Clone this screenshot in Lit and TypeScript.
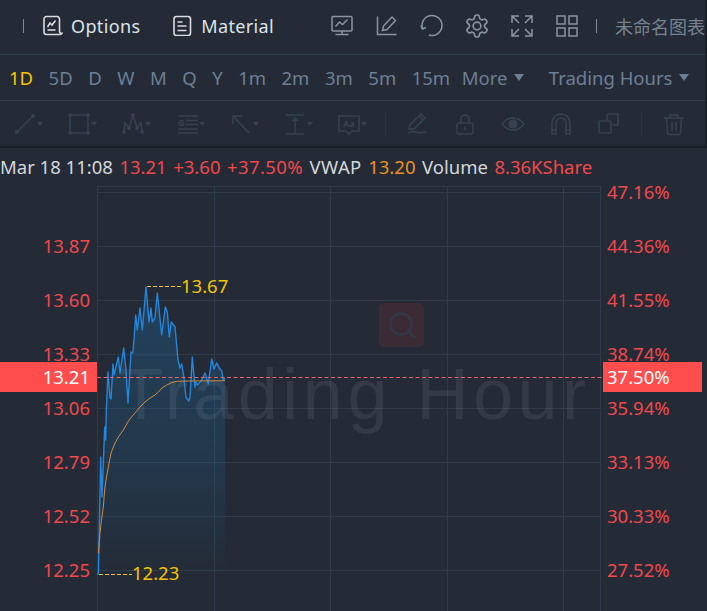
import { LitElement, html, svg, css } from "lit";
import { customElement } from "lit/decorators.js";

const PERIODS = ["5D", "D", "W", "M", "Q", "Y", "1m", "2m", "3m", "5m", "15m"];

const GRID_X = [97, 214, 330, 447, 563, 600];
const GRID_Y = [186, 192, 246, 300, 354, 408, 462, 516, 570];

const LEFT_AXIS: [string, number][] = [
  ["13.87", 246],
  ["13.60", 300],
  ["13.33", 354],
  ["13.06", 408],
  ["12.79", 462],
  ["12.52", 516],
  ["12.25", 570],
];

const RIGHT_AXIS: [string, number][] = [
  ["47.16%", 192],
  ["44.36%", 246],
  ["41.55%", 300],
  ["38.74%", 354],
  ["35.94%", 408],
  ["33.13%", 462],
  ["30.33%", 516],
  ["27.52%", 570],
];

// traced from the intraday curve, page coordinates
const PRICE: [number, number][] = [
  [98, 575], [98.5, 570], [100.7, 457], [102, 497], [104.7, 427], [105.7, 440], [106.3, 410],
  [108, 372], [110, 398], [111, 399], [113, 364], [114, 375], [118.3, 357], [120, 373],
  [123.7, 348], [125.7, 367], [128, 403], [131, 352], [132.7, 353], [134, 340], [135.7, 315],
  [137.3, 330], [140, 308], [142.3, 330], [146, 287], [149, 322], [151, 308], [152.3, 322],
  [155, 318], [157.3, 293], [161.7, 335], [165.3, 307], [167.3, 312], [169.3, 337],
  [171.3, 322], [175, 327], [178, 360], [180, 368], [181.7, 364], [184, 378], [186, 397],
  [188.7, 401], [190, 397], [192.3, 357], [195, 387], [196, 382], [197.3, 385], [199.3, 383],
  [201.7, 380], [205, 373], [208.3, 384], [211.7, 359], [214, 369], [216.7, 363], [219.3, 368],
  [221.7, 371], [223.3, 380], [225, 378],
];

const VWAP: [number, number][] = [
  [98.5, 553], [100, 533], [101.5, 520], [103.3, 507], [105, 486], [108.3, 467], [111, 453],
  [115, 443], [119, 436], [123.3, 430], [129, 420], [135, 413], [140, 407], [145, 402],
  [150, 398], [155, 395], [158.3, 392], [162, 388], [166.7, 385], [172, 382.500],
  [177.3, 381.3], [190, 381], [225, 380.7],
];

const toPoints = (pts: [number, number][]) => pts.map(([x, y]) => `${x},${y}`).join(" ");

const ICONS = {
  options: svg`<path d="M3.500 1h10.500a2.500 2.500 0 0 1 2.500 2.500V15.500c0 1.500.6 2.300 2 2.300h.5c-.3 .8-1 1.200-2 1.200H3.500A2.500 2.500 0 0 1 1 16.500V3.500A2.500 2.500 0 0 1 3.500 1z"/><path d="M4.500 11.500l2.500-4 2 2 3.500-4.500"/><path d="M4.500 14.500h8"/>`,
  material: svg`<rect x="1" y="1" width="16.500" height="19" rx="2.500"/><path d="M4.500 6.500h5M4.500 10.500h9M4.500 15h9"/>`,
  monitor: svg`<rect x="1" y="1.500" width="20" height="14.500" rx="1"/><path d="M4.500 11.500l4-4.500 3 2.500 5-5"/><path d="M11 16v3.500M4.500 19.500h13"/>`,
  edit: svg`<path d="M1.500 1.500v18h19"/><path d="M6.500 15.500l1-4.500 8.500-9 3.500 3.500-8.500 9z"/>`,
  undo: svg`<path d="M1.500 13.600A10 10 0 1 1 8 20"/><path d="M0 10.500L1.500 14l3.500-1.500"/>`,
  expand: svg`<path d="M1 8V1h7M1 1l7 7M14 1h7v7M21 1l-7 7M1 14v7h7M1 21l7-7M21 14v7h-7M21 21l-7-7"/>`,
  grid: svg`<rect x="1" y="1" width="8" height="8"/><rect x="13" y="1" width="8" height="8"/><rect x="1" y="13" width="8" height="8"/><rect x="13" y="13" width="8" height="8"/>`,
  gear: svg`<path d="M12.220 2h-.44a2 2 0 0 0-2 2v.18a2 2 0 0 1-1 1.730l-.43.25a2 2 0 0 1-2 0l-.15-.08a2 2 0 0 0-2.730.73l-.22.38a2 2 0 0 0 .73 2.730l.15.1a2 2 0 0 1 1 1.720v.51a2 2 0 0 1-1 1.740l-.15.09a2 2 0 0 0-.73 2.730l.22.38a2 2 0 0 0 2.730.73l.15-.08a2 2 0 0 1 2 0l.43.25a2 2 0 0 1 1 1.730V20a2 2 0 0 0 2 2h.44a2 2 0 0 0 2-2v-.18a2 2 0 0 1 1-1.730l.43-.25a2 2 0 0 1 2 0l.15.08a2 2 0 0 0 2.730-.73l.22-.39a2 2 0 0 0-.73-2.730l-.15-.08a2 2 0 0 1-1-1.740v-.5a2 2 0 0 1 1-1.740l.15-.09a2 2 0 0 0 .73-2.730l-.22-.38a2 2 0 0 0-2.730-.73l-.15.08a2 2 0 0 1-2 0l-.43-.25a2 2 0 0 1-1-1.730V4a2 2 0 0 0-2-2z"/><circle cx="12" cy="12" r="3.500"/>`,
};

const TOOLS = [
  svg`<path d="M4 20L20 4"/><circle cx="4" cy="20" r="2" class="dot"/><circle cx="20" cy="4" r="2" class="dot"/>`,
  svg`<rect x="3" y="3" width="18" height="18"/><circle cx="3" cy="3" r="2" class="dot"/><circle cx="21" cy="3" r="2" class="dot"/><circle cx="3" cy="21" r="2" class="dot"/><circle cx="21" cy="21" r="2" class="dot"/>`,
  svg`<path d="M3 20l1-9 4 5 4-13 4 13 4-5 1 9"/><circle cx="3" cy="20" r="2" class="dot"/><circle cx="8" cy="16" r="2" class="dot"/><circle cx="12" cy="3" r="2" class="dot"/><circle cx="16" cy="16" r="2" class="dot"/><circle cx="21" cy="20" r="2" class="dot"/>`,
  svg`<path d="M3 4h20M11 8.500h12M11 12.500h12M3 17h20M3 21h20"/><text x="3" y="14" class="tool-glyph">G</text>`,
  svg`<path d="M4 4l16 17M4 12V4h9"/>`,
  svg`<path d="M3 3h18M3 22h18M12 5v17"/><path d="M8.500 9L12 5l3.500 4z" class="dot"/>`,
  svg`<path d="M2 4h20v15h-7l-3 3-3-3H2z"/><text x="6" y="15" class="tool-glyph">Aa</text>`,
];

const TOOLS_RIGHT = [
  svg`<path d="M4 17l1-4L16 2l4 4L9 17z"/><path d="M14 4l4 4"/><path d="M3 21c3-2 5-2 8-1s6 1 10 0"/>`,
  svg`<rect x="4" y="11" width="16" height="11" rx="2"/><path d="M8 11V7a4 4 0 0 1 8 0v4M12 15v3"/>`,
  svg`<path d="M1 12c6-8 16-8 22 0-6 8-16 8-22 0z"/><circle cx="12" cy="12" r="4.500" class="dot"/>`,
  svg`<path d="M3 22V11a9 9 0 0 1 18 0v11h-4V11a5 5 0 0 0-10 0v11zM3 18h4M17 18h4"/>`,
  svg`<path d="M10 2h11v11h-5"/><path d="M10 2v6"/><rect x="2" y="9" width="12" height="12" rx="1.500"/>`,
];

const TRASH = svg`<path d="M2 6h20M8 6V3h8v3M4.500 6l1 15a1.500 1.500 0 0 0 1.500 1.500h10a1.500 1.500 0 0 0 1.500-1.500l1-15M10 10v9M14 10v9"/>`;

@customElement("app-root")
export class AppRoot extends LitElement {
  static styles = css`
    :host {
      display: block;
      width: 707px;
      height: 611px;
      overflow: hidden;
      background: #242b37;
      font-family: "Noto Sans", "Noto Sans CJK SC", sans-serif;
      font-size: 18.500px;
    }

    .toolbar {
      width: 705px;
      box-sizing: border-box;
      display: flex;
      align-items: center;
      background: #242b37;
      box-shadow: 2px 0 0 #1a2029;
      overflow: hidden;
    }

    .top {
      height: 55px;
      padding-left: 23px;
      border-bottom: 1px solid #2f3c49;
      padding-bottom: 3px;
    }

    .sep {
      flex: none;
      width: 1px;
      height: 14px;
      background: #7f8893;
    }

    .tab {
      display: flex;
      align-items: center;
      gap: 8px;
      color: #dfe3e7;
      font-size: 18px;
      letter-spacing: 0.35px;
    }

    .tab svg {
      fill: none;
      stroke: #d8dce0;
      stroke-width: 1.600;
    }

    .tab.first {
      margin-left: 19px;
    }

    .tab.second {
      margin-left: 33px;
    }

    .actions {
      display: flex;
      gap: 23px;
      margin-left: 57px;
    }

    .actions svg {
      display: block;
      fill: none;
      stroke: #8a949f;
      stroke-width: 1.500;
      overflow: visible;
    }

    .sep.short {
      margin-left: 18px;
    }

    .title {
      flex: none;
      margin-left: 18px;
      color: #75818f;
      font-size: 18px;
      white-space: nowrap;
    }

    .periods {
      height: 46px;
      padding-left: 9px;
      gap: 15.500px;
      border-bottom: 1px solid #2f3c49;
      color: #6d7f96;
    }

    .periods .active {
      color: #f5c400;
    }

    .more {
      display: flex;
      align-items: center;
      gap: 7px;
      margin-left: -4px;
    }

    .more.hours {
      margin-left: 9px;
    }

    .caret {
      flex: none;
      width: 0;
      height: 0;
      border-left: 5px solid transparent;
      border-right: 5px solid transparent;
      border-top: 7px solid #6d7f96;
    }

    .tools {
      height: 47px;
      padding-left: 13px;
      border-bottom: 2px solid #181d25;
    }

    .tool {
      flex: none;
      display: flex;
      align-items: center;
      width: 54px;
    }

    .tool svg,
    .tool-wide svg {
      display: block;
      fill: none;
      stroke: #364250;
      stroke-width: 1.500;
    }

    .tool svg .dot,
    .tool-wide svg .dot {
      fill: #364250;
      stroke: none;
    }

    .tool svg .tool-glyph {
      fill: #364250;
      stroke: none;
      font-size: 9px;
      font-weight: 700;
    }

    .tool .caret {
      border-left-width: 3.500px;
      border-right-width: 3.500px;
      border-top: 4px solid #364250;
    }

    .tool-div {
      flex: none;
      width: 1px;
      height: 22px;
      margin: 0 19px 0 -6px;
      background: #2b3542;
    }

    .tool-div.end {
      margin: 0 20px 0 -4px;
    }

    .tool-wide {
      flex: none;
      width: 48px;
    }

    .legend {
      height: 38px;
      box-sizing: border-box;
      padding-bottom: 2px;
      display: flex;
      align-items: center;
      gap: 6.500px;
      color: #d4d7db;
      white-space: nowrap;
    }

    .legend .wide {
      letter-spacing: 0.4px;
    }

    .up {
      color: #f2474a;
    }

    .vwap {
      color: #ef8f26;
    }

    .chart {
      display: block;
      overflow: visible;
    }

    .grid {
      stroke: #2f3b48;
      stroke-width: 1;
    }

    .watermark {
      fill: rgba(255, 255, 255, 0.07);
      font-family: "Liberation Sans", sans-serif;
      font-size: 72px;
      letter-spacing: 4.500px;
    }

    .axis {
      fill: #f2474a;
      font-size: 18.500px;
    }

    .axis.left {
      text-anchor: end;
    }

    .tag {
      fill: #ff4d4d;
    }

    .tag-text {
      fill: #ffffff;
      font-size: 18.500px;
    }

    .tag-text.left {
      text-anchor: end;
    }

    .extreme {
      fill: #f5c400;
      font-size: 18.500px;
    }

    .extreme-line {
      stroke: #f5c400;
      stroke-dasharray: 4 2;
    }

    .last {
      stroke: #e5656a;
      stroke-dasharray: 4 2.500;
    }

    .price {
      fill: none;
      stroke: #2186dd;
      stroke-width: 1.400;
      stroke-linejoin: round;
    }

    .area {
      fill: url(#areaFill);
    }

    .avg {
      fill: none;
      stroke: #d08a44;
      stroke-width: 1;
    }

    .wm-box {
      fill: #3a2b35;
    }

    .wm-icon {
      fill: none;
      stroke: #303945;
      stroke-width: 2.500;
    }
  `;

  private icon(body: unknown, w: number, h: number = w, box = "0 0 22 22") {
    return html`<svg width=${w} height=${h} viewBox=${box}>${body}</svg>`;
  }

  private renderTop() {
    return html`
      <div class="toolbar top">
        <span class="sep"></span>
        <div class="tab first">${this.icon(ICONS.options, 20, 21, "0 0 20 20")}<span>Options</span></div>
        <div class="tab second">${this.icon(ICONS.material, 20, 21, "0 0 20 20")}<span>Material</span></div>
        <div class="actions">
          ${this.icon(ICONS.monitor, 22)} ${this.icon(ICONS.edit, 22)} ${this.icon(ICONS.undo, 22)}
          ${this.icon(ICONS.gear, 22, 22, "2 2 20 20")} ${this.icon(ICONS.expand, 22)} ${this.icon(ICONS.grid, 22)}
        </div>
        <span class="sep short"></span>
        <span class="title">未命名图表</span>
      </div>
    `;
  }

  private renderPeriods() {
    return html`
      <div class="toolbar periods">
        <span class="active">1D</span>
        ${PERIODS.map((p) => html`<span>${p}</span>`)}
        <div class="more"><span>More</span><i class="caret"></i></div>
        <div class="more hours"><span>Trading Hours</span><i class="caret"></i></div>
      </div>
    `;
  }

  private renderTools() {
    return html`
      <div class="toolbar tools">
        ${TOOLS.map(
          (t) => html`<div class="tool">${this.icon(t, 24, 24, "0 0 24 24")}<i class="caret"></i></div>`,
        )}
        <span class="tool-div"></span>
        ${TOOLS_RIGHT.map((t) => html`<div class="tool-wide">${this.icon(t, 24, 24, "0 0 24 24")}</div>`)}
        <span class="tool-div end"></span>
        <div class="tool-wide">${this.icon(TRASH, 24, 24, "0 0 24 24")}</div>
      </div>
    `;
  }

  private renderChart() {
    const area = `98,575 ${toPoints(PRICE)} 225,575`;
    return html`
      <svg class="chart" width="707" height="425" viewBox="0 186 707 425">
        <defs>
          <linearGradient id="areaFill" gradientUnits="userSpaceOnUse" x1="0" y1="287" x2="0" y2="575">
            <stop offset="0" stop-color="#1f6a9c" stop-opacity="0.36"></stop>
            <stop offset="0.6" stop-color="#1f6a9c" stop-opacity="0.2"></stop>
            <stop offset="1" stop-color="#1f6a9c" stop-opacity="0"></stop>
          </linearGradient>
        </defs>

        ${GRID_X.map((x) => svg`<line class="grid" x1=${x + 0.5} x2=${x + 0.5} y1="186" y2="611"></line>`)}
        ${GRID_Y.map((y) => svg`<line class="grid" x1="97" x2="601" y1=${y + 0.5} y2=${y + 0.5}></line>`)}

        <polygon class="area" points=${area}></polygon>

        <rect class="wm-box" x="379" y="303" width="45" height="44" rx="5"></rect>
        <circle class="wm-icon" cx="401" cy="324" r="10.500"></circle>
        <path class="wm-icon" d="M409 332l6 6"></path>
        <text class="watermark" x="119" y="419">Trading Hour</text>

        <polyline class="price" points=${toPoints(PRICE)}></polyline>
        <polyline class="avg" points=${toPoints(VWAP)}></polyline>

        <line class="last" x1="97" x2="603" y1="377.500" y2="377.500"></line>

        <line class="extreme-line" x1="147" x2="181" y1="286.500" y2="286.500"></line>
        <text class="extreme" x="181" y="293">13.67</text>
        <line class="extreme-line" x1="99" x2="132" y1="574.500" y2="574.500"></line>
        <text class="extreme" x="132" y="580">12.23</text>

        ${LEFT_AXIS.map(([t, y]) => svg`<text class="axis left" x="90" y=${y + 7}>${t}</text>`)}
        ${RIGHT_AXIS.map(([t, y]) => svg`<text class="axis" x="607" y=${y + 7}>${t}</text>`)}

        <rect class="tag" x="0" y="362" width="97" height="30"></rect>
        <text class="tag-text left" x="90" y="384">13.21</text>
        <rect class="tag" x="603" y="362" width="99" height="30"></rect>
        <text class="tag-text" x="607" y="384">37.50%</text>
      </svg>
    `;
  }

  protected render() {
    return html`
      ${this.renderTop()} ${this.renderPeriods()} ${this.renderTools()}
      <div class="legend">
        <span>Mar 18 11:08</span>
        <span class="up">13.21</span>
        <span class="up">+3.60</span>
        <span class="up wide">+37.50%</span>
        <span class="wide">VWAP</span>
        <span class="vwap">13.20</span>
        <span>Volume</span>
        <span class="up">8.36KShare</span>
      </div>
      ${this.renderChart()}
    `;
  }
}

declare global {
  interface HTMLElementTagNameMap {
    "app-root": AppRoot;
  }
}
